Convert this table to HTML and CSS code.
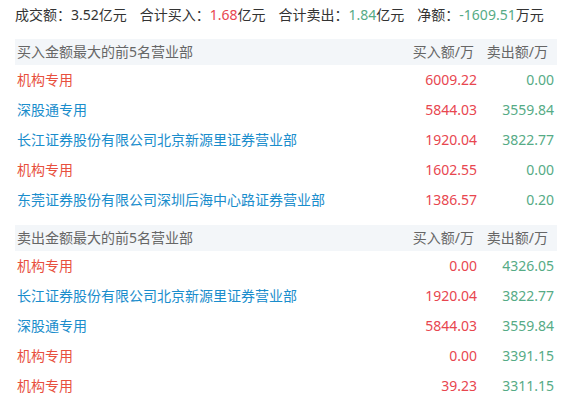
FILE: index.html
```html
<!DOCTYPE html>
<html lang="zh-CN">
<head>
    <meta charset="UTF-8">
    <title>龙虎榜营业部</title>
    <link rel="stylesheet" href="styles.css">
</head>
<body>
    <div class="wrap">
        <div class="summary">
            <span>成交额：3.52亿元</span>
            <span>合计买入：<em class="up">1.68</em>亿元</span>
            <span>合计卖出：<em class="down">1.84</em>亿元</span>
            <span>净额：<em class="down">-1609.51</em>万元</span>
        </div>

        <div class="table">
            <div class="head">
                <span class="name">买入金额最大的前5名营业部</span>
                <span class="buy">买入额/万</span>
                <span class="sell">卖出额/万</span>
            </div>
            <div class="row"><span class="name org">机构专用</span><span class="buy">6009.22</span><span class="sell">0.00</span></div>
            <div class="row"><span class="name">深股通专用</span><span class="buy">5844.03</span><span class="sell">3559.84</span></div>
            <div class="row"><span class="name">长江证券股份有限公司北京新源里证券营业部</span><span class="buy">1920.04</span><span class="sell">3822.77</span></div>
            <div class="row"><span class="name org">机构专用</span><span class="buy">1602.55</span><span class="sell">0.00</span></div>
            <div class="row"><span class="name">东莞证券股份有限公司深圳后海中心路证券营业部</span><span class="buy">1386.57</span><span class="sell">0.20</span></div>
        </div>

        <div class="table">
            <div class="head">
                <span class="name">卖出金额最大的前5名营业部</span>
                <span class="buy">买入额/万</span>
                <span class="sell">卖出额/万</span>
            </div>
            <div class="row"><span class="name org">机构专用</span><span class="buy">0.00</span><span class="sell">4326.05</span></div>
            <div class="row"><span class="name">长江证券股份有限公司北京新源里证券营业部</span><span class="buy">1920.04</span><span class="sell">3822.77</span></div>
            <div class="row"><span class="name">深股通专用</span><span class="buy">5844.03</span><span class="sell">3559.84</span></div>
            <div class="row"><span class="name org">机构专用</span><span class="buy">0.00</span><span class="sell">3391.15</span></div>
            <div class="row"><span class="name org">机构专用</span><span class="buy">39.23</span><span class="sell">3311.15</span></div>
        </div>
    </div>
</body>
</html>
```

FILE: styles.css
```css
body {
    margin: 0;
    background-color: #fff;
    font-family: "Noto Sans", "Noto Sans CJK SC", sans-serif;
    font-size: 14px;
    color: #333;
}
.wrap {
    margin: 0 7px 0 15px;
}
.summary {
    height: 30px;
    line-height: 30px;
    display: flex;
    gap: 13px;
    margin-bottom: 9px;
}
.summary em {
    font-style: normal;
}
.up {
    color: #e8464f;
}
.down {
    color: #56ab86;
}
.table {
    margin-bottom: 10px;
}
.head,
.row {
    display: grid;
    grid-template-columns: 1fr 77px 77px;
    padding: 0 3px 0 2px;
    white-space: nowrap;
}
.head {
    height: 26px;
    line-height: 26px;
    background-color: #f3f6f9;
    color: #666;
}
.row {
    height: 30px;
    line-height: 30px;
}
.buy,
.sell {
    text-align: right;
}
.head .buy {
    padding-right: 3px;
}
.head .sell {
    padding-right: 6px;
}
.row .name {
    color: #1a8dcc;
}
.row .name.org {
    color: #e8503e;
}
.row .buy {
    color: #e8464f;
}
.row .sell {
    color: #56ab86;
}
```
